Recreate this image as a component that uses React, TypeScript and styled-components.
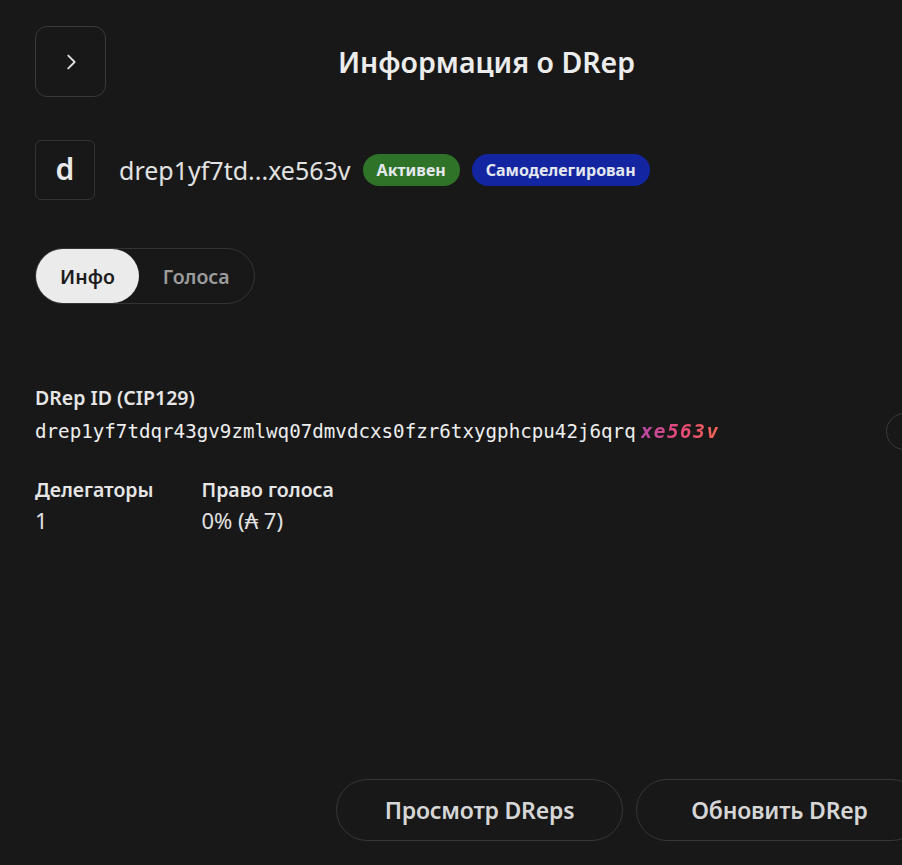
import React from "react";
import styled, { createGlobalStyle } from "styled-components";

const GlobalStyle = createGlobalStyle`
  html, body {
    margin: 0;
    padding: 0;
    background: #181818;
    overflow: hidden;
  }
  body {
    font-family: "Noto Sans", "Open Sans", sans-serif;
    color: #e6e6e6;
  }
`;

const Page = styled.div`
  box-sizing: border-box;
  width: 923px;
  height: 865px;
  padding: 26px 0 24px 35px;
  display: flex;
  flex-direction: column;
`;

const Header = styled.header`
  display: flex;
  align-items: center;
  width: 832px;
`;

const BackButton = styled.button`
  width: 71px;
  height: 71px;
  flex: none;
  border: 1px solid #3a3a3a;
  border-radius: 12px;
  background: transparent;
  display: flex;
  align-items: center;
  justify-content: center;
  padding: 0;
  color: #e0e0e0;
`;

const Title = styled.h1`
  flex: 1;
  margin: 0;
  text-align: center;
  font-size: 28.5px;
  font-weight: 600;
  color: #ececec;
`;

const IdentityRow = styled.div`
  display: flex;
  align-items: center;
  margin-top: 43px;
`;

const Avatar = styled.div`
  width: 60px;
  height: 60px;
  box-sizing: border-box;
  border: 1px solid #333;
  border-radius: 6px;
  display: flex;
  align-items: center;
  justify-content: center;
  font-size: 30px;
  font-weight: 600;
  color: #e8e8e8;
  padding-bottom: 4px;
`;

const Address = styled.span`
  margin-left: 24px;
  font-size: 25px;
  color: #e2e2e2;
`;

const Badge = styled.span<{ $tone: "green" | "blue" }>`
  margin-left: 12px;
  height: 32px;
  padding: 0 14px;
  border-radius: 16px;
  display: inline-flex;
  align-items: center;
  font-size: 16px;
  font-weight: 700;
  color: #e4e8ee;
  background: ${(p) => (p.$tone === "green" ? "#2e7327" : "#1325a0")};
`;

const Tabs = styled.div`
  margin-top: 48px;
  align-self: flex-start;
  display: flex;
  height: 56px;
  box-sizing: border-box;
  border: 1px solid #343434;
  border-radius: 28px;
`;

const Tab = styled.button<{ $active?: boolean }>`
  height: 54px;
  border: none;
  border-radius: 27px;
  padding: 0 ${(p) => (p.$active ? "24px" : "24px")};
  font-family: inherit;
  font-size: 19.5px;
  font-weight: 600;
  background: ${(p) => (p.$active ? "#ebebeb" : "transparent")};
  color: ${(p) => (p.$active ? "#1c1c1c" : "#9c9c9c")};
`;

const Section = styled.section`
  margin-top: 82px;
  display: flex;
  flex-direction: column;
`;

const Label = styled.div`
  font-size: 19.5px;
  font-weight: 600;
  color: #e6e6e6;
  line-height: 24px;
`;

const IdRow = styled.div`
  display: flex;
  align-items: center;
  margin-top: 3px;
  height: 36px;
`;

const Mono = styled.span`
  font-family: "DejaVu Sans Mono", "Liberation Mono", monospace;
  font-size: 19.2px;
  color: #eeeeee;
`;

const MonoAccent = styled.span`
  font-family: "DejaVu Sans Mono", "Liberation Mono", monospace;
  font-size: 19.5px;
  font-weight: 700;
  font-style: italic;
  margin-left: 5px;
  letter-spacing: 1.4px;
  background: linear-gradient(90deg, #b94aa6 0%, #e84a78 50%, #f26552 100%);
  -webkit-background-clip: text;
  background-clip: text;
  color: transparent;
`;

const CopyButton = styled.button`
  margin-left: auto;
  width: 37px;
  height: 37px;
  border-radius: 50%;
  border: 1px solid #3a3a3a;
  background: transparent;
  flex: none;
`;

const Stats = styled.div`
  display: flex;
  gap: 48px;
  margin-top: 29px;
`;

const Stat = styled.div`
  display: flex;
  flex-direction: column;
`;

const Value = styled.div`
  font-size: 22px;
  color: #e2e2e2;
  line-height: 30px;
  margin-top: 3px;
`;

const Actions = styled.div`
  margin-top: auto;
  display: flex;
  justify-content: flex-end;
  gap: 13px;
`;

const ActionButton = styled.button`
  width: 287px;
  height: 62px;
  border-radius: 31px;
  border: 1px solid #363636;
  background: transparent;
  font-family: inherit;
  font-size: 23px;
  font-weight: 600;
  color: #d6d6d6;
  letter-spacing: -0.2px;
`;

export default function App() {
  return (
    <>
      <GlobalStyle />
      <Page>
        <Header>
          <BackButton aria-label="back">
            <svg width="22" height="22" viewBox="0 0 24 24" fill="none" stroke="#e0e0e0" strokeWidth="2" strokeLinecap="round" strokeLinejoin="round">
              <path d="M9 5l7 7-7 7" />
            </svg>
          </BackButton>
          <Title>Информация о DRep</Title>
        </Header>

        <IdentityRow>
          <Avatar>d</Avatar>
          <Address>drep1yf7td...xe563v</Address>
          <Badge $tone="green">Активен</Badge>
          <Badge $tone="blue">Самоделегирован</Badge>
        </IdentityRow>

        <Tabs>
          <Tab $active>Инфо</Tab>
          <Tab>Голоса</Tab>
        </Tabs>

        <Section>
          <Label>DRep ID (CIP129)</Label>
          <IdRow>
            <Mono>drep1yf7tdqr43gv9zmlwq07dmvdcxs0fzr6txygphcpu42j6qrq</Mono>
            <MonoAccent>xe563v</MonoAccent>
            <CopyButton aria-label="copy" />
          </IdRow>
          <Stats>
            <Stat>
              <Label>Делегаторы</Label>
              <Value>1</Value>
            </Stat>
            <Stat>
              <Label>Право голоса</Label>
              <Value>0% (₳ 7)</Value>
            </Stat>
          </Stats>
        </Section>

        <Actions>
          <ActionButton>Просмотр DReps</ActionButton>
          <ActionButton>Обновить DRep</ActionButton>
        </Actions>
      </Page>
    </>
  );
}
